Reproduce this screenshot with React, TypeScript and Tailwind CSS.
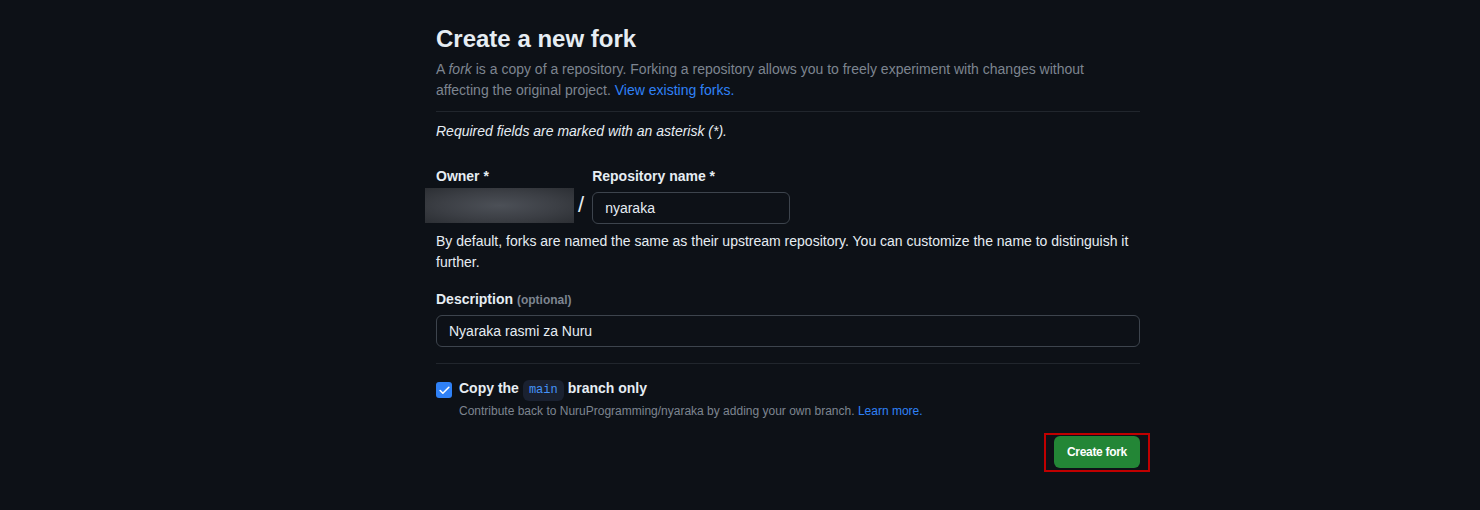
import { Check } from "lucide-react";

const sans = { fontFamily: '"Liberation Sans", Arial, sans-serif' };

function Divider() {
  return <div className="h-px w-full bg-[#21262d]" />;
}

export default function App() {
  return (
    <div className="min-h-[510px] w-full bg-[#0d1117] text-[#e6edf3]" style={sans}>
      <div className="ml-[436px] w-[704px] pt-[24px]">
        <h1 className="text-[24px] font-semibold leading-[30px]">Create a new fork</h1>
        <p className="mt-[5px] text-[14px] leading-[21px] text-[#7d8590]">
          A <em>fork</em> is a copy of a repository. Forking a repository allows you to freely experiment with changes without
          affecting the original project. <span className="text-[#2f81f7]">View existing forks.</span>
        </p>
        <div className="mt-[10px] mb-[9px]">
          <Divider />
        </div>
        <p className="text-[14px] italic leading-[21px]">Required fields are marked with an asterisk (*).</p>

        <div className="mt-[24px] flex items-start">
          <div className="flex flex-col">
            <span className="text-[14px] font-semibold leading-[21px]">Owner *</span>
            <div className="-ml-[11px] mt-[1px] h-[35px] w-[149px] bg-[radial-gradient(ellipse_at_center,#4c5057_0%,#3c3f45_55%,#2c2f34_100%)]" />
          </div>
          <span className="ml-[4px] mr-[8px] mt-[26px] text-[22px] leading-[26px]">/</span>
          <div className="flex flex-col">
            <span className="text-[14px] font-semibold leading-[21px]">Repository name *</span>
            <div className="mt-[5px] flex h-[32px] w-[198px] items-center rounded-[6px] border border-[#3d444d] px-[12px] text-[14px]">
              nyaraka
            </div>
          </div>
        </div>
        <p className="mt-[7px] text-[14px] leading-[21px]">
          By default, forks are named the same as their upstream repository. You can customize the name to distinguish it
          further.
        </p>

        <div className="mt-[16px] text-[14px] font-semibold leading-[21px]">
          Description <span className="text-[12px] text-[#7d8590]">(optional)</span>
        </div>
        <div className="mt-[4px] flex h-[32px] w-full items-center rounded-[6px] border border-[#3d444d] px-[12px] text-[14px]">
          Nyaraka rasmi za Nuru
        </div>

        <div className="mt-[16px] mb-[14px]">
          <Divider />
        </div>

        <div className="flex items-start gap-[7px]">
          <div className="mt-[4px] flex h-[16px] w-[16px] items-center justify-center rounded-[3px] bg-[#2f81f7]">
            <Check className="h-[13px] w-[13px] text-white" strokeWidth={3} />
          </div>
          <div className="flex flex-col">
            <div className="flex items-baseline text-[14px] font-semibold leading-[21px]">
              Copy the
              <code
                className="mx-[4px] rounded-[6px] bg-[#1a2130] px-[6px] py-[2px] text-[12px] font-normal leading-[17px] text-[#4493f8]"
                style={{ fontFamily: '"Liberation Mono", "DejaVu Sans Mono", monospace' }}
              >
                main
              </code>
              branch only
            </div>
            <span className="mt-[1px] text-[12px] leading-[18px] text-[#7d8590]">
              Contribute back to NuruProgramming/nyaraka by adding your own branch.{" "}
              <span className="text-[#2f81f7]">Learn more.</span>
            </span>
          </div>
        </div>

        <div className="mt-[13px] flex justify-end">
          <div className="-mr-[10px] border-2 border-[#c00000] px-[8px] pt-[1px] pb-[2px]">
            <button className="h-[32px] rounded-[6px] bg-[#238636] px-[13px] text-[12px] font-bold tracking-tight text-white">
              Create fork
            </button>
          </div>
        </div>
      </div>
    </div>
  );
}
